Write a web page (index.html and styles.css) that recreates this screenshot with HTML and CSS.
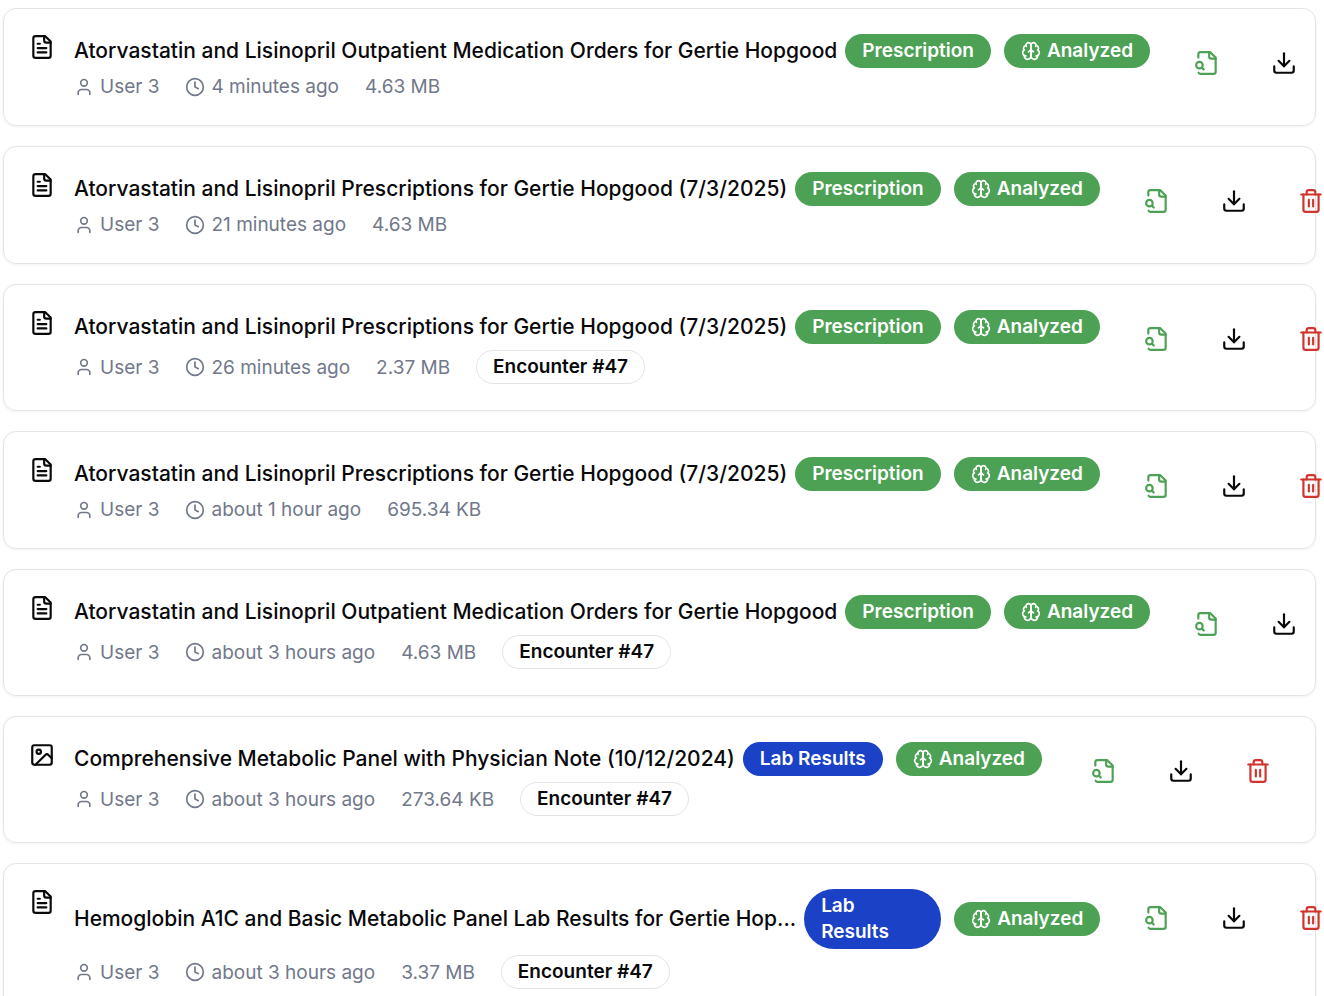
FILE: index.html
```html
<!DOCTYPE html>
<html lang="en">
<head>
<meta charset="utf-8">
<title>Documents</title>
<link rel="stylesheet" href="styles.css">
</head>
<body>
<svg class="sprite" aria-hidden="true">
  <symbol id="file-text" viewBox="0 0 24 24"><path d="M15 2H6a2 2 0 0 0-2 2v16a2 2 0 0 0 2 2h12a2 2 0 0 0 2-2V7Z"/><path d="M14 2v4a2 2 0 0 0 2 2h4"/><path d="M10 9H8"/><path d="M16 13H8"/><path d="M16 17H8"/></symbol>
  <symbol id="image" viewBox="0 0 24 24"><rect width="18" height="18" x="3" y="3" rx="2"/><circle cx="9" cy="9" r="2"/><path d="m21 15-3.086-3.086a2 2 0 0 0-2.828 0L6 21"/></symbol>
  <symbol id="user" viewBox="0 0 24 24"><path d="M19 21v-2a4 4 0 0 0-4-4H9a4 4 0 0 0-4 4v2"/><circle cx="12" cy="7" r="4"/></symbol>
  <symbol id="clock" viewBox="0 0 24 24"><circle cx="12" cy="12" r="10"/><path d="M12 6v6l4 2"/></symbol>
  <symbol id="brain" viewBox="0 0 24 24"><path d="M12 5a3 3 0 1 0-5.997.125 4 4 0 0 0-2.526 5.77 4 4 0 0 0 .556 6.588A4 4 0 1 0 12 18Z"/><path d="M12 5a3 3 0 1 1 5.997.125 4 4 0 0 1 2.526 5.77 4 4 0 0 1-.556 6.588A4 4 0 1 1 12 18Z"/><path d="M15 13a4.5 4.5 0 0 1-3-4 4.5 4.5 0 0 1-3 4"/><path d="M17.599 6.5a3 3 0 0 0 .399-1.375"/><path d="M6.003 5.125A3 3 0 0 0 6.401 6.5"/><path d="M3.477 10.896a4 4 0 0 1 .585-.396"/><path d="M19.938 10.5a4 4 0 0 1 .585.396"/><path d="M6 18a4 4 0 0 1-1.967-.516"/><path d="M19.967 17.484A4 4 0 0 1 18 18"/></symbol>
  <symbol id="file-search" viewBox="0 0 24 24"><path d="M14 2v4a2 2 0 0 0 2 2h4"/><path d="M4.268 21a2 2 0 0 0 1.727 1H18a2 2 0 0 0 2-2V7l-5-5H6a2 2 0 0 0-2 2v3"/><path d="m9 18-1.5-1.5"/><circle cx="5" cy="14" r="3"/></symbol>
  <symbol id="download" viewBox="0 0 24 24"><path d="M21 15v4a2 2 0 0 1-2 2H5a2 2 0 0 1-2-2v-4"/><path d="m7 10 5 5 5-5"/><path d="M12 15V3"/></symbol>
  <symbol id="trash" viewBox="0 0 24 24"><path d="M3 6h18"/><path d="M19 6v14a2 2 0 0 1-2 2H7a2 2 0 0 1-2-2V6"/><path d="M8 6V4a2 2 0 0 1 2-2h4a2 2 0 0 1 2 2v2"/><path d="M10 11v6"/><path d="M14 11v6"/></symbol>
</svg>
<main class="documents">
  <article class="card">
    <svg class="icon kind"><use href="#file-text"/></svg>
    <div class="details">
      <div class="heading"><h2 class="name">Atorvastatin and Lisinopril Outpatient Medication Orders for Gertie Hopgood</h2><span class="badge green">Prescription</span><span class="badge green"><svg class="icon small"><use href="#brain"/></svg>Analyzed</span></div>
      <div class="meta"><span class="fact"><svg class="icon small"><use href="#user"/></svg>User 3</span><span class="fact"><svg class="icon small"><use href="#clock"/></svg>4 minutes ago</span><span>4.63 MB</span></div>
    </div>
    <div class="actions adjacent"><button class="action view" aria-label="View analysis"><svg class="icon"><use href="#file-search"/></svg></button><button class="action" aria-label="Download"><svg class="icon"><use href="#download"/></svg></button></div>
  </article>
  <article class="card">
    <svg class="icon kind"><use href="#file-text"/></svg>
    <div class="details">
      <div class="heading"><h2 class="name">Atorvastatin and Lisinopril Prescriptions for Gertie Hopgood (7/3/2025)</h2><span class="badge green">Prescription</span><span class="badge green"><svg class="icon small"><use href="#brain"/></svg>Analyzed</span></div>
      <div class="meta"><span class="fact"><svg class="icon small"><use href="#user"/></svg>User 3</span><span class="fact"><svg class="icon small"><use href="#clock"/></svg>21 minutes ago</span><span>4.63 MB</span></div>
    </div>
    <div class="actions"><button class="action view" aria-label="View analysis"><svg class="icon"><use href="#file-search"/></svg></button><button class="action" aria-label="Download"><svg class="icon"><use href="#download"/></svg></button><button class="action delete" aria-label="Delete"><svg class="icon"><use href="#trash"/></svg></button></div>
  </article>
  <article class="card">
    <svg class="icon kind"><use href="#file-text"/></svg>
    <div class="details">
      <div class="heading"><h2 class="name">Atorvastatin and Lisinopril Prescriptions for Gertie Hopgood (7/3/2025)</h2><span class="badge green">Prescription</span><span class="badge green"><svg class="icon small"><use href="#brain"/></svg>Analyzed</span></div>
      <div class="meta"><span class="fact"><svg class="icon small"><use href="#user"/></svg>User 3</span><span class="fact"><svg class="icon small"><use href="#clock"/></svg>26 minutes ago</span><span>2.37 MB</span><span class="badge outline">Encounter #47</span></div>
    </div>
    <div class="actions"><button class="action view" aria-label="View analysis"><svg class="icon"><use href="#file-search"/></svg></button><button class="action" aria-label="Download"><svg class="icon"><use href="#download"/></svg></button><button class="action delete" aria-label="Delete"><svg class="icon"><use href="#trash"/></svg></button></div>
  </article>
  <article class="card">
    <svg class="icon kind"><use href="#file-text"/></svg>
    <div class="details">
      <div class="heading"><h2 class="name">Atorvastatin and Lisinopril Prescriptions for Gertie Hopgood (7/3/2025)</h2><span class="badge green">Prescription</span><span class="badge green"><svg class="icon small"><use href="#brain"/></svg>Analyzed</span></div>
      <div class="meta"><span class="fact"><svg class="icon small"><use href="#user"/></svg>User 3</span><span class="fact"><svg class="icon small"><use href="#clock"/></svg>about 1 hour ago</span><span>695.34 KB</span></div>
    </div>
    <div class="actions"><button class="action view" aria-label="View analysis"><svg class="icon"><use href="#file-search"/></svg></button><button class="action" aria-label="Download"><svg class="icon"><use href="#download"/></svg></button><button class="action delete" aria-label="Delete"><svg class="icon"><use href="#trash"/></svg></button></div>
  </article>
  <article class="card">
    <svg class="icon kind"><use href="#file-text"/></svg>
    <div class="details">
      <div class="heading"><h2 class="name">Atorvastatin and Lisinopril Outpatient Medication Orders for Gertie Hopgood</h2><span class="badge green">Prescription</span><span class="badge green"><svg class="icon small"><use href="#brain"/></svg>Analyzed</span></div>
      <div class="meta"><span class="fact"><svg class="icon small"><use href="#user"/></svg>User 3</span><span class="fact"><svg class="icon small"><use href="#clock"/></svg>about 3 hours ago</span><span>4.63 MB</span><span class="badge outline">Encounter #47</span></div>
    </div>
    <div class="actions adjacent"><button class="action view" aria-label="View analysis"><svg class="icon"><use href="#file-search"/></svg></button><button class="action" aria-label="Download"><svg class="icon"><use href="#download"/></svg></button></div>
  </article>
  <article class="card">
    <svg class="icon kind"><use href="#image"/></svg>
    <div class="details">
      <div class="heading"><h2 class="name">Comprehensive Metabolic Panel with Physician Note (10/12/2024)</h2><span class="badge blue">Lab Results</span><span class="badge green"><svg class="icon small"><use href="#brain"/></svg>Analyzed</span></div>
      <div class="meta"><span class="fact"><svg class="icon small"><use href="#user"/></svg>User 3</span><span class="fact"><svg class="icon small"><use href="#clock"/></svg>about 3 hours ago</span><span>273.64 KB</span><span class="badge outline">Encounter #47</span></div>
    </div>
    <div class="actions"><button class="action view" aria-label="View analysis"><svg class="icon"><use href="#file-search"/></svg></button><button class="action" aria-label="Download"><svg class="icon"><use href="#download"/></svg></button><button class="action delete" aria-label="Delete"><svg class="icon"><use href="#trash"/></svg></button></div>
  </article>
  <article class="card">
    <svg class="icon kind"><use href="#file-text"/></svg>
    <div class="details">
      <div class="heading"><h2 class="name">Hemoglobin A1C and Basic Metabolic Panel Lab Results for Gertie Hop...</h2><span class="badge blue wrapped">Lab Results</span><span class="badge green"><svg class="icon small"><use href="#brain"/></svg>Analyzed</span></div>
      <div class="meta"><span class="fact"><svg class="icon small"><use href="#user"/></svg>User 3</span><span class="fact"><svg class="icon small"><use href="#clock"/></svg>about 3 hours ago</span><span>3.37 MB</span><span class="badge outline">Encounter #47</span></div>
    </div>
    <div class="actions"><button class="action view" aria-label="View analysis"><svg class="icon"><use href="#file-search"/></svg></button><button class="action" aria-label="Download"><svg class="icon"><use href="#download"/></svg></button><button class="action delete" aria-label="Delete"><svg class="icon"><use href="#trash"/></svg></button></div>
  </article>
</main>
</body>
</html>
```
FILE: styles.css
```css
* {
  box-sizing: border-box;
}

body {
  margin: 0;
  overflow: hidden;
  background: #fff;
  color: #09090b;
  font-family: Inter, "Liberation Sans", sans-serif;
}

.sprite {
  display: none;
}

.documents {
  display: flex;
  flex-direction: column;
  gap: 20px;
  padding: 8px 8px 8px 3px;
}

.card {
  display: flex;
  align-items: flex-start;
  padding: 25px 25px 26px;
  border: 1px solid #e4e4e7;
  border-radius: 13px;
  box-shadow: 0 1px 3px rgb(0 0 0 / 6%);
}

.icon {
  flex: none;
  display: block;
  width: 26px;
  height: 26px;
  fill: none;
  stroke: currentColor;
  stroke-width: 2;
  stroke-linecap: round;
  stroke-linejoin: round;
}

.icon.small {
  width: 20px;
  height: 20px;
}

.kind {
  margin-right: 19px;
}

.details {
  display: flex;
  flex: none;
  flex-direction: column;
  gap: 6px;
}

.heading {
  display: flex;
  align-items: center;
}

.name {
  margin: 0 8px 0 0;
  font-size: 21px;
  font-weight: 500;
  line-height: 32px;
  white-space: nowrap;
}

.badge {
  display: flex;
  align-items: center;
  gap: 6px;
  padding: 3px 16px;
  border: 1px solid transparent;
  border-radius: 30px;
  font-size: 19px;
  font-weight: 600;
  line-height: 26px;
  white-space: nowrap;
}

.badge + .badge {
  margin-left: 13px;
}

.green {
  background: #4ca154;
  color: #fff;
}

.blue {
  background: #1a41c6;
  color: #fff;
}

.outline {
  border-color: #e4e4e7;
  color: #09090b;
}

.wrapped {
  width: 137px;
  white-space: normal;
}

.meta {
  display: flex;
  align-items: center;
  gap: 26px;
  color: #71788a;
  font-size: 19px;
  line-height: 25px;
}

.fact {
  display: flex;
  align-items: center;
  gap: 6px;
}

.actions {
  display: flex;
  flex: none;
  gap: 13px;
  margin-left: auto;
  padding-left: 25px;
}

.actions.adjacent {
  margin-left: 0;
}

.action {
  display: flex;
  align-items: center;
  justify-content: center;
  width: 64px;
  height: 58px;
  padding: 0;
  border: 0;
  background: none;
  color: inherit;
}

.view {
  color: #4ca154;
}

.delete {
  color: #d0342c;
}
```
